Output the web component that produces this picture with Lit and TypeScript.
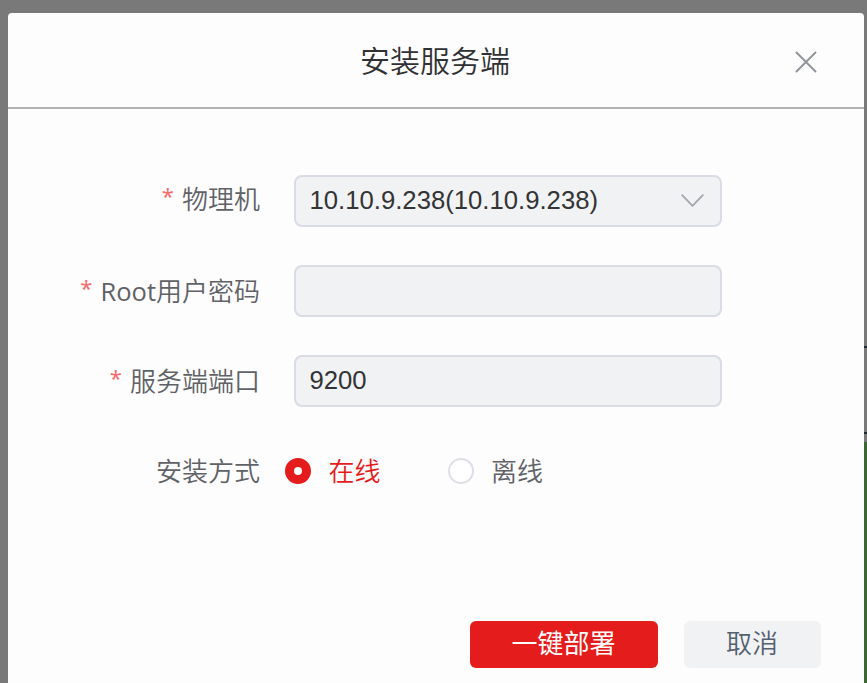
import { LitElement, html, css, svg } from "lit";
import { customElement, property, state } from "lit/decorators.js";
import { classMap } from "lit/directives/class-map.js";

const closeIcon = svg`<path d="M1.5 1.5 20.5 20.5M20.5 1.5 1.5 20.5" />`;
const arrowIcon = svg`<path d="M1.2 1.2 11.5 11.8 21.8 1.2" />`;

@customElement("form-row")
class FormRow extends LitElement {
  @property() prefixText = "";
  @property() label = "";
  @property({ type: Boolean }) required = false;
  @property({ type: Boolean, reflect: true }) raised = false;

  static styles = css`
    :host {
      display: flex;
      align-items: center;
      height: 52px;
    }
    .label {
      flex: none;
      box-sizing: border-box;
      width: 252px;
      display: flex;
      justify-content: flex-end;
      align-items: center;
      line-height: 38px;
      color: #606266;
      white-space: nowrap;
    }
    :host([raised]) .label {
      padding-bottom: 4px;
    }
    .latin {
      font-family: "Open Sans", sans-serif;
      font-weight: 400;
      font-size: 25.5px;
    }
    .star {
      color: #f56c6c;
      margin-right: 8px;
      padding-bottom: 8px;
      font-family: "Noto Sans", sans-serif;
      font-weight: 400;
      font-size: 22px;
      line-height: 30px;
    }
  `;

  render() {
    return html`
      <div class="label">
        ${this.required ? html`<span class="star">*</span>` : null}<span
          >${this.prefixText ? html`<span class="latin">${this.prefixText}</span>` : null}${this.label}</span
        >
      </div>
      <slot></slot>
    `;
  }
}

@customElement("app-root")
class AppRoot extends LitElement {
  @state() private mode = "在线";

  static styles = css`
    :host {
      display: flex;
      box-sizing: border-box;
      width: 867px;
      height: 683px;
      padding: 13px 0 0 8px;
      overflow: hidden;
      background: #797979;
      font-family: "Open Sans", "Noto Sans CJK SC", sans-serif;
      font-size: 26px;
      font-weight: 350;
    }
    .dialog {
      width: 856px;
      height: 670px;
      display: flex;
      flex-direction: column;
      border-radius: 4px 4px 0 0;
      background: #fefdfe;
    }
    .edge {
      flex: 1;
      display: flex;
      flex-direction: column;
    }
    .edge .gap { height: 333px; }
    .edge .line { height: 2px; background: #202a30; }
    .edge .gap2 { height: 84px; }
    .edge .gap3 { height: 8px; }
    .edge .green { flex: 1; background: #3d6732; }
    header {
      box-sizing: border-box;
      flex: none;
      height: 96px;
      border-bottom: 2px solid #b5b4b5;
      display: grid;
      grid-template-columns: 1fr auto 1fr;
      align-items: center;
    }
    .title {
      grid-column: 2;
      font-size: 30px;
      line-height: 40px;
      color: #303133;
      padding-top: 1px;
      margin-right: 2px;
    }
    .close {
      justify-self: end;
      margin: 4px 47px 0 0;
      width: 22px;
      height: 22px;
      fill: none;
      stroke: #909399;
      stroke-width: 1.9;
      stroke-linecap: round;
    }
    .form {
      flex: 1;
      display: flex;
      flex-direction: column;
      gap: 38px;
      padding-top: 66px;
    }
    .field {
      box-sizing: border-box;
      margin-left: 34px;
      width: 428px;
      height: 52px;
      border: 2px solid #d9dce5;
      border-radius: 8px;
      background: #f1f2f3;
      padding: 0 16.5px 2px 13.5px;
      display: flex;
      align-items: center;
      justify-content: space-between;
      font-family: "Liberation Sans", Arial, sans-serif;
      font-size: 25.7px;
      font-weight: 400;
      color: #333435;
    }
    .arrow {
      width: 23px;
      height: 13px;
      fill: none;
      stroke: #a5a8af;
      stroke-width: 1.9;
      stroke-linecap: round;
      stroke-linejoin: round;
    }
    .radio {
      display: flex;
      align-items: center;
      gap: 17px;
      color: #606266;
      line-height: 38px;
    }
    .radios {
      display: flex;
      gap: 67.5px;
      margin-left: 25.4px;
    }
    .dot {
      box-sizing: border-box;
      width: 26px;
      height: 26px;
      border-radius: 50%;
      border: 2px solid #dcdfe6;
      background: #fff;
    }
    .radio.on { color: #e51c1c; }
    .radio.on .dot { border: 9px solid #e51c1c; }
    footer {
      flex: none;
      display: flex;
      justify-content: flex-end;
      gap: 26px;
      padding: 0 43px 15px 0;
    }
    button {
      box-sizing: border-box;
      height: 47px;
      padding: 0 1px 3px 0;
      border: 0;
      border-radius: 6px;
      font: inherit;
      line-height: 38px;
    }
    .deploy { width: 188px; background: #e51c1c; color: #fff; font-weight: 400; }
    .cancel { width: 137px; background: #f1f2f3; color: #53606f; }
  `;

  private radio(name: string) {
    return html`<div
      class=${classMap({ radio: true, on: this.mode === name })}
      @click=${() => (this.mode = name)}
    >
      <span class="dot"></span><span>${name}</span>
    </div>`;
  }

  render() {
    return html`
      <div class="dialog">
        <header>
          <div class="title">安装服务端</div>
          <svg class="close" viewBox="0 0 22 22">${closeIcon}</svg>
        </header>
        <div class="form">
          <form-row label="物理机" required raised>
            <div class="field">
              <span>10.10.9.238(10.10.9.238)</span>
              <svg class="arrow" viewBox="0 0 23 13">${arrowIcon}</svg>
            </div>
          </form-row>
          <form-row .prefixText=${"Root"} label="用户密码" required><div class="field"></div></form-row>
          <form-row label="服务端端口" required><div class="field">9200</div></form-row>
          <form-row label="安装方式">
            <div class="radios">${this.radio("在线")}${this.radio("离线")}</div>
          </form-row>
        </div>
        <footer>
          <button class="deploy">一键部署</button>
          <button class="cancel">取消</button>
        </footer>
      </div>
      <div class="edge">
        <div class="gap"></div>
        <div class="line"></div>
        <div class="gap2"></div>
        <div class="line"></div>
        <div class="gap3"></div>
        <div class="green"></div>
      </div>
    `;
  }
}
